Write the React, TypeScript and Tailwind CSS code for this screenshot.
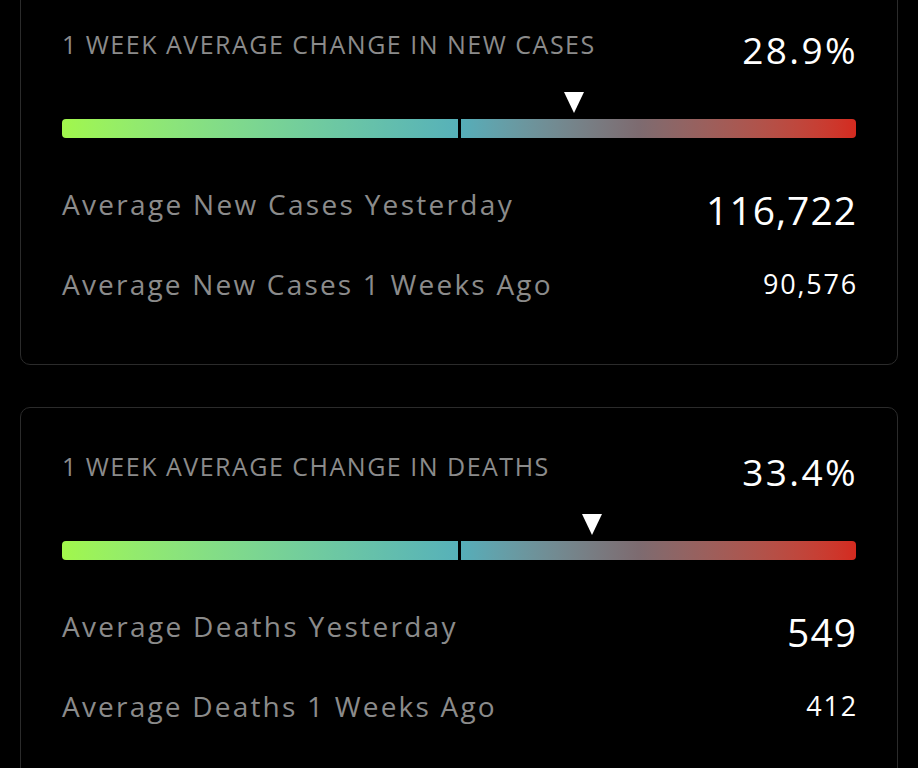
type Stat = {
  title: string;
  change: number;
  rows: { label: string; value: string }[];
};

const stats: Stat[] = [
  {
    title: '1 WEEK AVERAGE CHANGE IN NEW CASES',
    change: 28.9,
    rows: [
      { label: 'Average New Cases Yesterday', value: '116,722' },
      { label: 'Average New Cases 1 Weeks Ago', value: '90,576' },
    ],
  },
  {
    title: '1 WEEK AVERAGE CHANGE IN DEATHS',
    change: 33.4,
    rows: [
      { label: 'Average Deaths Yesterday', value: '549' },
      { label: 'Average Deaths 1 Weeks Ago', value: '412' },
    ],
  },
];

function ChangeBar({ change }: { change: number }) {
  // scale runs from -100% (left) to +100% (right)
  const pos = 50 + change / 2;
  return (
    <div>
      <div className="relative h-[21px] mb-[6px]">
        <svg
          className="absolute top-0 -translate-x-1/2"
          style={{ left: `${pos}%` }}
          width="20"
          height="21"
          viewBox="0 0 20 21"
        >
          <polygon points="0,0 20,0 10,21" fill="#ffffff" />
        </svg>
      </div>
      <div className="flex h-[19px] gap-[3px]">
        <div className="flex-1 rounded-l-[4px] bg-gradient-to-r from-[#a1f74b] to-[#57b1b9]" />
        <div className="flex-1 rounded-r-[4px] bg-gradient-to-r from-[#55aeb9] via-[#7d6b70] via-45% to-[#d42a1f]" />
      </div>
    </div>
  );
}

function StatCard({ stat }: { stat: Stat }) {
  return (
    <div className="rounded-[10px] border border-[#2b2b2b] px-[41px] pt-[45px] pb-[66px]">
      {/* Header */}
      <div className="flex items-start justify-between">
        <div className="pt-px text-[25px] leading-none tracking-[1.5px] text-[#8b8b8b]">{stat.title}</div>
        <div className="-mr-[2px] text-[37px] leading-none tracking-[2.4px] text-white">
          {stat.change.toFixed(1)}%
        </div>
      </div>

      <div className="mt-[24px]">
        <ChangeBar change={stat.change} />
      </div>

      {/* Rows */}
      <div className="mt-[52px] flex items-start justify-between">
        <div className="text-[28px] leading-none tracking-[2.3px] text-[#8b8b8b]">{stat.rows[0].label}</div>
        <div className="-mr-px text-[39px] leading-none tracking-[1px] text-white">{stat.rows[0].value}</div>
      </div>
      <div className="mt-[41px] flex items-start justify-between">
        <div className="text-[28px] leading-none tracking-[2.2px] text-[#8b8b8b]">{stat.rows[1].label}</div>
        <div className="-mr-[2px] text-[27px] leading-none tracking-[1.8px] text-white">{stat.rows[1].value}</div>
      </div>
    </div>
  );
}

export default function App() {
  return (
    <div
      className="min-h-screen overflow-hidden bg-black px-5"
      style={{ fontFamily: '"Open Sans", "Noto Sans", sans-serif' }}
    >
      <div className="-mt-[15px] flex flex-col gap-[42px] pb-10">
        {stats.map((s) => (
          <StatCard key={s.title} stat={s} />
        ))}
      </div>
    </div>
  );
}
